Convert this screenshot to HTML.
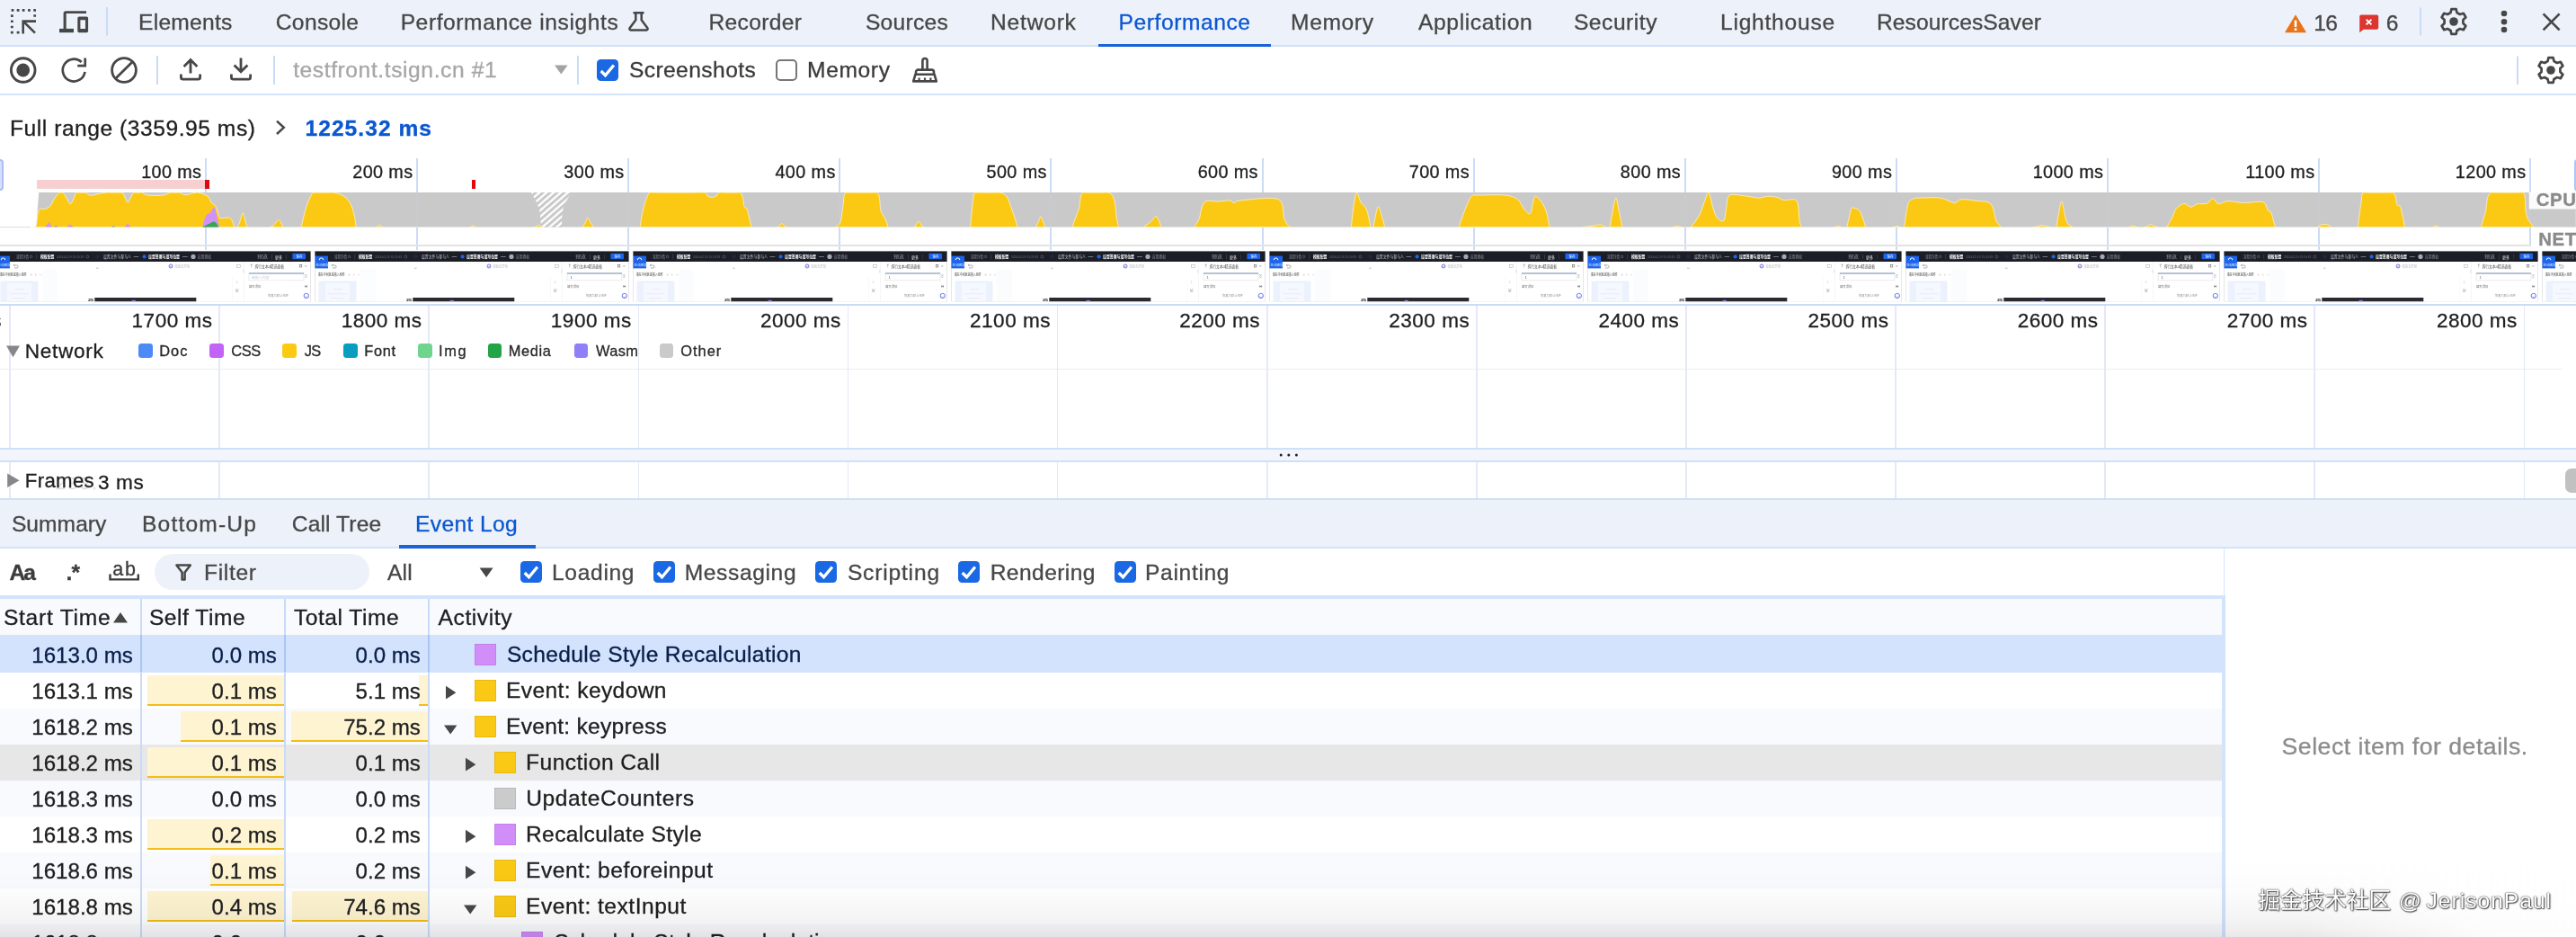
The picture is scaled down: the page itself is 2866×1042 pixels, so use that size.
<!DOCTYPE html>
<html lang="en"><head><meta charset="utf-8"><title>DevTools - Performance</title>
<style>
html,body{margin:0;padding:0}
body{width:2866px;height:1042px;position:relative;overflow:hidden;background:#fff;will-change:transform;font-family:"Liberation Sans","Noto Sans CJK SC",sans-serif;-webkit-font-smoothing:antialiased}
.t{position:absolute;white-space:pre;display:block;-webkit-text-stroke:0.32px currentColor}
.cb{position:absolute;box-sizing:border-box;border-radius:4.5px}
.cb.on{background:#1a68e3}
.cb.on svg{display:block}
.cb.off{border:2px solid #767676;background:#fff;border-radius:5px}
.wm{-webkit-text-stroke:0;color:#fff;text-shadow:0 0 2px rgba(0,0,0,.75),1px 1px 1.5px rgba(0,0,0,.7),-0.5px -0.5px 1px rgba(0,0,0,.45)}
svg{overflow:visible}
</style></head>
<body>
<nav id="devtools-tabs" aria-label="DevTools panels">
<div id="tabbar" style="position:absolute;left:0;top:0;width:2866px;height:50px;background:#edf2fa"></div>
<div style="position:absolute;left:0px;top:50px;width:2866px;height:2px;background:#cfe0f9;"></div>
<svg style="position:absolute;left:0px;top:0px;" width="2866" height="50" viewBox="0 0 2866 50"><rect x="12.60" y="9.95" width="2.8" height="2.7" rx=".5" fill="#474747"/><rect x="18.70" y="9.95" width="2.8" height="2.7" rx=".5" fill="#474747"/><rect x="24.70" y="9.95" width="2.8" height="2.7" rx=".5" fill="#474747"/><rect x="31.00" y="9.95" width="2.8" height="2.7" rx=".5" fill="#474747"/><rect x="37.20" y="9.95" width="2.8" height="2.7" rx=".5" fill="#474747"/><rect x="11.95" y="16.25" width="2.8" height="2.7" rx=".5" fill="#474747"/><rect x="11.95" y="22.40" width="2.8" height="2.7" rx=".5" fill="#474747"/><rect x="11.95" y="28.65" width="2.8" height="2.7" rx=".5" fill="#474747"/><rect x="11.95" y="34.75" width="2.8" height="2.7" rx=".5" fill="#474747"/><rect x="37.25" y="16.15" width="2.8" height="2.7" rx=".5" fill="#474747"/><rect x="18.70" y="34.80" width="2.8" height="2.7" rx=".5" fill="#474747"/><path d="M40,23.6 H25.7 V37.5 M26.4,24.3 L39,36.6" fill="none" stroke="#474747" stroke-width="2.6"/><g fill="#474747"><path d="M96,12.2 H73.4 a2.8,2.8 0 0 0 -2.8,2.8 V32 H73.7 V14.9 H96 Z"/><rect x="66" y="31.9" width="16" height="4.3"/><path fill-rule="evenodd" d="M88,18.5 H96.4 a1.7,1.7 0 0 1 1.7,1.7 V34.5 a1.7,1.7 0 0 1 -1.7,1.7 H88 a1.7,1.7 0 0 1 -1.7,-1.7 V20.2 a1.7,1.7 0 0 1 1.7,-1.7 Z M89.4,22.2 V31.9 H95 V22.2 Z"/></g><rect x="118" y="8" width="2" height="31.5" fill="#c9dbf5"/><g fill="none" stroke="#474747" stroke-width="2.5" stroke-linejoin="round"><path d="M704.5,14.3 H716.5 M707.3,14.3 V22.2 L700.6,31.2 a1.4,1.4 0 0 0 1.2,2.2 H719.2 a1.4,1.4 0 0 0 1.2,-2.2 L713.7,22.2 V14.3"/></g><path d="M2554,16.2 L2565.6,35.4 a0.6,0.6 0 0 1 -0.5,0.9 H2542.9 a0.6,0.6 0 0 1 -0.5,-0.9 Z" fill="#e8731a"/><rect x="2552.7" y="22.6" width="2.6" height="7.4" fill="#fff"/><rect x="2552.7" y="31.4" width="2.6" height="2.6" fill="#fff"/><path d="M2627,16.6 H2644.4 a1.8,1.8 0 0 1 1.8,1.8 V31 a1.8,1.8 0 0 1 -1.8,1.8 H2629.6 L2625.2,36.2 V18.4 a1.8,1.8 0 0 1 1.8,-1.8 Z" fill="#dc362e"/><path d="M2632.6,21.6 L2638.4,27.4 M2638.4,21.6 L2632.6,27.4" stroke="#fff" stroke-width="2" fill="none"/><rect x="2692" y="8.5" width="2" height="31" fill="#c9dbf5"/><path d="M2726.55,13.98 L2727.41,10.04 L2732.59,10.04 L2733.45,13.98 L2736.95,16.00 L2740.80,14.78 L2743.39,19.26 L2740.41,21.98 L2740.41,26.02 L2743.39,28.74 L2740.80,33.22 L2736.95,32.00 L2733.45,34.02 L2732.59,37.96 L2727.41,37.96 L2726.55,34.02 L2723.05,32.00 L2719.20,33.22 L2716.61,28.74 L2719.59,26.02 L2719.59,21.98 L2716.61,19.26 L2719.20,14.78 L2723.05,16.00Z" fill="none" stroke="#474747" stroke-width="2.7" stroke-linejoin="round"/><circle cx="2730" cy="24" r="4.8" fill="#474747"/><circle cx="2786" cy="15" r="3.3" fill="#474747"/><circle cx="2786" cy="24.3" r="3.3" fill="#474747"/><circle cx="2786" cy="33" r="3.3" fill="#474747"/><path d="M2829.6,15.4 L2847.6,33.4 M2847.6,15.4 L2829.6,33.4" stroke="#474747" stroke-width="2.7" fill="none"/></svg>
<span class="t" style="left:154.03px;top:9.38px;font-size:24.6px;line-height:32px;color:#474747;letter-spacing:0.250px;">Elements</span>
<span class="t" style="left:306.77px;top:9.38px;font-size:24.6px;line-height:32px;color:#474747;letter-spacing:0.342px;">Console</span>
<span class="t" style="left:445.63px;top:9.38px;font-size:24.6px;line-height:32px;color:#474747;letter-spacing:0.585px;">Performance insights</span>
<span class="t" style="left:788.53px;top:9.38px;font-size:24.6px;line-height:32px;color:#474747;letter-spacing:0.319px;">Recorder</span>
<span class="t" style="left:962.89px;top:9.38px;font-size:24.6px;line-height:32px;color:#474747;letter-spacing:0.281px;">Sources</span>
<span class="t" style="left:1102.03px;top:9.38px;font-size:24.6px;line-height:32px;color:#474747;letter-spacing:0.781px;">Network</span>
<span class="t" style="left:1244.53px;top:9.38px;font-size:24.6px;line-height:32px;color:#0b57d0;letter-spacing:0.574px;">Performance</span>
<span class="t" style="left:1436.03px;top:9.38px;font-size:24.6px;line-height:32px;color:#474747;letter-spacing:0.632px;">Memory</span>
<span class="t" style="left:1578.00px;top:9.38px;font-size:24.6px;line-height:32px;color:#474747;letter-spacing:0.630px;">Application</span>
<span class="t" style="left:1750.89px;top:9.38px;font-size:24.6px;line-height:32px;color:#474747;letter-spacing:0.543px;">Security</span>
<span class="t" style="left:1914.03px;top:9.38px;font-size:24.6px;line-height:32px;color:#474747;letter-spacing:0.753px;">Lighthouse</span>
<span class="t" style="left:2088.03px;top:9.38px;font-size:24.6px;line-height:32px;color:#474747;letter-spacing:0.080px;">ResourcesSaver</span>
<span class="t" style="left:2574.16px;top:10.18px;font-size:24.6px;line-height:32px;color:#474747;letter-spacing:-0.477px;">16</span>
<span class="t" style="left:2654.77px;top:10.18px;font-size:24.6px;line-height:32px;color:#474747;">6</span>
<div style="position:absolute;left:1222px;top:48.9px;width:192px;height:3.2px;background:#1a62d8;"></div>
</nav>
<div id="perf-toolbar" aria-label="Performance toolbar">
<div style="position:absolute;left:0px;top:52px;width:2866px;height:52px;background:#fff;"></div>
<div style="position:absolute;left:0px;top:103.6px;width:2866px;height:2px;background:#d3e3fd;"></div>
<svg style="position:absolute;left:0px;top:52px;" width="2866" height="52" viewBox="0 52 2866 52"><circle cx="25.7" cy="78" r="13.3" fill="none" stroke="#474747" stroke-width="2.9"/><circle cx="25.7" cy="78" r="7.4" fill="#474747"/><path d="M94.48,79.83 A12.4,12.4 0 1 1 90.66,69.03" fill="none" stroke="#474747" stroke-width="2.7"/><path d="M94.7,64.4 V73.2 H86.2" fill="none" stroke="#474747" stroke-width="2.7"/><circle cx="138" cy="78" r="13.4" fill="none" stroke="#474747" stroke-width="2.8"/><path d="M147.6,68.6 L128.4,87.4" stroke="#474747" stroke-width="2.8"/><rect x="174" y="62" width="2" height="32" fill="#c9dbf5"/><g fill="none" stroke="#474747" stroke-width="2.8"><path d="M201.4,82.5 V86 a2.2,2.2 0 0 0 2.2,2.2 H220.4 a2.2,2.2 0 0 0 2.2,-2.2 V82.5"/><path d="M212,81.5 V66.8 M204.6,74 L212,66.6 L219.4,74"/></g><g fill="none" stroke="#474747" stroke-width="2.8"><path d="M257.4,82.5 V86 a2.2,2.2 0 0 0 2.2,2.2 H276.4 a2.2,2.2 0 0 0 2.2,-2.2 V82.5"/><path d="M268,64.6 V79.6 M260.6,72.4 L268,79.8 L275.4,72.4"/></g><rect x="304" y="62" width="2" height="32" fill="#c9dbf5"/><path d="M617,72.6 H631.6 L624.3,82.6 Z" fill="#a3a3a3"/><rect x="642" y="62" width="2" height="32" fill="#c9dbf5"/><g fill="none" stroke="#474747" stroke-width="2.6" stroke-linejoin="round"><path d="M1026.4,77.5 V67.6 a2.6,2.6 0 0 1 5.2,0 V77.5"/><path d="M1019,82.6 V80 a2.4,2.4 0 0 1 2.4,-2.4 H1036.6 a2.4,2.4 0 0 1 2.4,2.4 V82.6"/><path d="M1018.4,82.8 H1039.6 L1041.8,90.4 H1016.2 Z"/><path d="M1022.6,90.4 V86.6 M1029,90.4 V86.6 M1035.4,90.4 V86.6" stroke-width="2.2"/></g><rect x="2800" y="62.5" width="2" height="31.5" fill="#c9dbf5"/><path d="M2834.55,67.98 L2835.41,64.04 L2840.59,64.04 L2841.45,67.98 L2844.95,70.00 L2848.80,68.78 L2851.39,73.26 L2848.41,75.98 L2848.41,80.02 L2851.39,82.74 L2848.80,87.22 L2844.95,86.00 L2841.45,88.02 L2840.59,91.96 L2835.41,91.96 L2834.55,88.02 L2831.05,86.00 L2827.20,87.22 L2824.61,82.74 L2827.59,80.02 L2827.59,75.98 L2824.61,73.26 L2827.20,68.78 L2831.05,70.00Z" fill="none" stroke="#474747" stroke-width="2.7" stroke-linejoin="round"/><circle cx="2838" cy="78" r="4.8" fill="#474747"/></svg>
<span class="t" style="left:326.13px;top:62.38px;font-size:24.6px;line-height:32px;color:#a6a6a6;letter-spacing:0.592px;">testfront.tsign.cn #1</span>
<div class="cb on" style="left:664px;top:66px;width:24px;height:24px"><svg width="24" height="24" viewBox="0 0 24 24"><path d="M4.7 13 L9.5 17.7 L18.9 6.5" fill="none" stroke="#fff" stroke-width="3.3" stroke-linecap="butt" stroke-linejoin="miter"/></svg></div>
<span class="t" style="left:699.89px;top:62.38px;font-size:24.6px;line-height:32px;color:#3a3a3a;letter-spacing:0.419px;">Screenshots</span>
<div class="cb off" style="left:863px;top:66px;width:24px;height:24px"></div>
<span class="t" style="left:898.03px;top:62.38px;font-size:24.6px;line-height:32px;color:#3a3a3a;letter-spacing:0.632px;">Memory</span>
</div>
<div id="range-breadcrumb" aria-label="Range breadcrumb">
<div style="position:absolute;left:0px;top:105.6px;width:2866px;height:68px;background:#fff;"></div>
<span class="t" style="left:11.03px;top:126.88px;font-size:24.6px;line-height:32px;color:#1f1f1f;letter-spacing:0.537px;">Full range (3359.95 ms)</span>
<svg style="position:absolute;left:300px;top:128px;" width="24" height="28" viewBox="300 128 24 28"><path d="M308,134.6 L315.8,141.8 L308,149" fill="none" stroke="#474747" stroke-width="2.5"/></svg>
<span class="t" style="left:339.52px;top:126.88px;font-size:24.6px;line-height:32px;color:#0b57d0;font-weight:700;letter-spacing:1.024px;">1225.32 ms</span>
</div>
<section id="timeline-overview" aria-label="Timeline overview">
<div style="position:absolute;left:0px;top:173px;width:2866px;height:166px;background:#fff;"></div>
<div style="position:absolute;left:-5px;top:177.4px;width:4.6px;height:31px;background:#d5e1fb;border:2px solid #aebdf3;border-radius:4px"></div>
<div style="position:absolute;left:2863.5px;top:177px;width:8px;height:32px;background:#dbe7fd;border:2px solid #a8c7fa;border-radius:4px"></div>
<div style="position:absolute;left:228.0px;top:176px;width:2px;height:38px;background:#cddcf6;"></div>
<div style="position:absolute;left:228.0px;top:252.6px;width:2px;height:25.4px;background:#cddcf6;"></div>
<span class="t" style="left:157.15px;top:177.64px;font-size:19.8px;line-height:26px;color:#1f1f1f;letter-spacing:0.400px;">100 ms</span>
<div style="position:absolute;left:463.1px;top:176px;width:2px;height:38px;background:#cddcf6;"></div>
<div style="position:absolute;left:463.1px;top:252.6px;width:2px;height:25.4px;background:#cddcf6;"></div>
<span class="t" style="left:392.25px;top:177.64px;font-size:19.8px;line-height:26px;color:#1f1f1f;letter-spacing:0.400px;">200 ms</span>
<div style="position:absolute;left:698.2px;top:176px;width:2px;height:38px;background:#cddcf6;"></div>
<div style="position:absolute;left:698.2px;top:252.6px;width:2px;height:25.4px;background:#cddcf6;"></div>
<span class="t" style="left:627.35px;top:177.64px;font-size:19.8px;line-height:26px;color:#1f1f1f;letter-spacing:0.400px;">300 ms</span>
<div style="position:absolute;left:933.3px;top:176px;width:2px;height:38px;background:#cddcf6;"></div>
<div style="position:absolute;left:933.3px;top:252.6px;width:2px;height:25.4px;background:#cddcf6;"></div>
<span class="t" style="left:862.45px;top:177.64px;font-size:19.8px;line-height:26px;color:#1f1f1f;letter-spacing:0.400px;">400 ms</span>
<div style="position:absolute;left:1168.4px;top:176px;width:2px;height:38px;background:#cddcf6;"></div>
<div style="position:absolute;left:1168.4px;top:252.6px;width:2px;height:25.4px;background:#cddcf6;"></div>
<span class="t" style="left:1097.55px;top:177.64px;font-size:19.8px;line-height:26px;color:#1f1f1f;letter-spacing:0.400px;">500 ms</span>
<div style="position:absolute;left:1403.5px;top:176px;width:2px;height:38px;background:#cddcf6;"></div>
<div style="position:absolute;left:1403.5px;top:252.6px;width:2px;height:25.4px;background:#cddcf6;"></div>
<span class="t" style="left:1332.65px;top:177.64px;font-size:19.8px;line-height:26px;color:#1f1f1f;letter-spacing:0.400px;">600 ms</span>
<div style="position:absolute;left:1638.6px;top:176px;width:2px;height:38px;background:#cddcf6;"></div>
<div style="position:absolute;left:1638.6px;top:252.6px;width:2px;height:25.4px;background:#cddcf6;"></div>
<span class="t" style="left:1567.75px;top:177.64px;font-size:19.8px;line-height:26px;color:#1f1f1f;letter-spacing:0.400px;">700 ms</span>
<div style="position:absolute;left:1873.7px;top:176px;width:2px;height:38px;background:#cddcf6;"></div>
<div style="position:absolute;left:1873.7px;top:252.6px;width:2px;height:25.4px;background:#cddcf6;"></div>
<span class="t" style="left:1802.85px;top:177.64px;font-size:19.8px;line-height:26px;color:#1f1f1f;letter-spacing:0.400px;">800 ms</span>
<div style="position:absolute;left:2108.8px;top:176px;width:2px;height:38px;background:#cddcf6;"></div>
<div style="position:absolute;left:2108.8px;top:252.6px;width:2px;height:25.4px;background:#cddcf6;"></div>
<span class="t" style="left:2037.95px;top:177.64px;font-size:19.8px;line-height:26px;color:#1f1f1f;letter-spacing:0.400px;">900 ms</span>
<div style="position:absolute;left:2343.9px;top:176px;width:2px;height:38px;background:#cddcf6;"></div>
<div style="position:absolute;left:2343.9px;top:252.6px;width:2px;height:25.4px;background:#cddcf6;"></div>
<span class="t" style="left:2261.66px;top:177.64px;font-size:19.8px;line-height:26px;color:#1f1f1f;letter-spacing:0.400px;">1000 ms</span>
<div style="position:absolute;left:2579.0px;top:176px;width:2px;height:38px;background:#cddcf6;"></div>
<div style="position:absolute;left:2579.0px;top:252.6px;width:2px;height:25.4px;background:#cddcf6;"></div>
<span class="t" style="left:2498.24px;top:177.64px;font-size:19.8px;line-height:26px;color:#1f1f1f;letter-spacing:0.400px;">1100 ms</span>
<div style="position:absolute;left:2814.1px;top:176px;width:2px;height:38px;background:#cddcf6;"></div>
<div style="position:absolute;left:2814.1px;top:252.6px;width:2px;height:19.6px;background:#cddcf6;"></div>
<span class="t" style="left:2731.86px;top:177.64px;font-size:19.8px;line-height:26px;color:#1f1f1f;letter-spacing:0.400px;">1200 ms</span>
<div style="position:absolute;left:41px;top:200px;width:187px;height:10px;background:#f7cfd1;"></div>
<div style="position:absolute;left:228px;top:200px;width:4.6px;height:10px;background:#e3060c;"></div>
<div style="position:absolute;left:524.5px;top:200px;width:4.6px;height:10px;background:#e3060c;"></div>
<svg style="position:absolute;left:0px;top:213.0px;" width="2866" height="40.599999999999994" viewBox="0 213.0 2866 40.599999999999994"><path d="M43,214.0 H2866 V252.6 H40 Z" fill="#c9c9c9"/><rect x="228.0" y="214.0" width="2" height="38.599999999999994" fill="#cddcf6" opacity=".14"/><rect x="463.1" y="214.0" width="2" height="38.599999999999994" fill="#cddcf6" opacity=".14"/><rect x="698.2" y="214.0" width="2" height="38.599999999999994" fill="#cddcf6" opacity=".14"/><rect x="933.3" y="214.0" width="2" height="38.599999999999994" fill="#cddcf6" opacity=".14"/><rect x="1168.4" y="214.0" width="2" height="38.599999999999994" fill="#cddcf6" opacity=".14"/><rect x="1403.5" y="214.0" width="2" height="38.599999999999994" fill="#cddcf6" opacity=".14"/><rect x="1638.6" y="214.0" width="2" height="38.599999999999994" fill="#cddcf6" opacity=".14"/><rect x="1873.7" y="214.0" width="2" height="38.599999999999994" fill="#cddcf6" opacity=".14"/><rect x="2108.8" y="214.0" width="2" height="38.599999999999994" fill="#cddcf6" opacity=".14"/><rect x="2343.9" y="214.0" width="2" height="38.599999999999994" fill="#cddcf6" opacity=".14"/><rect x="2579.0" y="214.0" width="2" height="38.599999999999994" fill="#cddcf6" opacity=".14"/><rect x="2814.1" y="214.0" width="2" height="38.599999999999994" fill="#cddcf6" opacity=".14"/><defs><pattern id="hat" width="5.2" height="5.2" patternUnits="userSpaceOnUse" patternTransform="rotate(-41)"><rect width="5.2" height="5.2" fill="#fff"/><rect width="5.2" height="2.9" fill="#c8c8c8"/></pattern></defs><path d="M590.8,214.0 H635.7 L628,227.0 L625.4,236.0 L624.9,252.6 H602 L600.6,236.0 L597.5,226.0 Z" fill="url(#hat)"/><path d="M36.0,252.60 C36.7,252.41 38.8,252.60 40.0,251.44 C41.2,248.29 41.3,236.84 43.0,233.69 C44.7,230.53 47.8,233.36 50.0,232.53 C52.2,231.69 54.3,230.53 56.0,228.67 C57.7,226.80 58.3,223.78 60.0,221.33 C61.7,218.89 64.3,215.22 66.0,214.00 C67.7,214.30 68.7,214.30 70.0,214.00 C71.3,215.03 72.4,218.05 73.8,220.18 C75.1,222.30 76.6,226.74 78.0,226.74 C79.4,226.74 80.8,222.30 82.0,220.18 C83.2,218.05 83.0,215.03 85.0,214.00 C87.0,214.30 91.5,214.30 94.0,214.00 C96.5,214.51 98.0,216.70 100.0,217.09 C102.0,217.47 102.8,216.83 106.0,216.32 C109.2,215.80 114.8,214.39 119.0,214.00 C123.2,214.30 128.2,214.30 131.0,214.00 C133.8,214.30 134.7,214.30 136.0,214.00 C137.3,215.03 138.0,218.31 139.0,220.18 C140.0,222.04 141.0,225.19 142.0,225.19 C143.0,225.19 143.8,222.04 145.0,220.18 C146.2,218.31 146.9,215.03 149.0,214.00 C151.1,214.30 155.0,214.30 157.5,214.00 C160.0,214.51 160.1,216.57 164.0,217.09 C167.9,217.60 176.7,217.60 181.0,217.09 C185.3,216.57 187.0,214.51 190.0,214.00 C193.0,214.30 196.3,214.30 199.0,214.00 C201.7,214.45 202.7,216.70 206.0,216.70 C209.3,216.70 215.2,214.30 219.0,214.00 C222.8,214.30 226.8,216.06 229.0,217.09 C231.2,218.12 231.4,218.63 232.5,220.18 C233.6,221.72 234.4,224.94 235.6,226.35 C236.8,227.77 238.2,226.80 239.4,228.67 C240.6,230.53 241.6,235.23 242.5,237.55 C243.4,239.86 242.8,241.73 245.0,242.56 C247.2,243.40 253.4,240.89 256.0,242.56 C258.6,244.24 259.8,250.93 260.6,252.60Z" fill="#fbc914" stroke="#fff3c4" stroke-width="0.8" stroke-linejoin="round"/><path d="M263.8,252.60 C264.1,251.96 265.2,250.80 266.0,248.74 C266.8,246.68 267.8,242.24 268.5,240.25 C269.2,238.25 269.5,236.77 270.0,236.77 C270.5,236.77 270.9,238.25 271.5,240.25 C272.1,242.24 272.8,246.68 273.5,248.74 C274.2,250.80 275.2,251.96 275.6,252.60Z" fill="#fbc914" stroke="#fff3c4" stroke-width="0.8" stroke-linejoin="round"/><path d="M300.0,252.60 C300.7,252.28 302.7,251.76 304.0,250.67 C305.3,249.58 307.0,247.07 308.0,246.04 C309.0,245.01 309.3,244.37 310.0,244.49 C310.7,244.62 311.3,245.78 312.0,246.81 C312.7,247.84 313.4,249.70 314.0,250.67 C314.6,251.63 315.3,252.28 315.6,252.60Z" fill="#fbc914" stroke="#fff3c4" stroke-width="0.8" stroke-linejoin="round"/><path d="M335.0,252.60 C335.8,249.19 338.3,237.67 340.0,232.14 C341.7,226.61 343.3,222.43 345.0,219.40 C346.7,216.38 345.8,214.90 350.0,214.00 C354.2,214.30 364.6,214.30 370.0,214.00 C375.4,214.71 379.2,216.06 382.5,218.25 C385.8,220.43 388.1,223.59 390.0,227.12 C391.9,230.66 393.0,235.23 394.0,239.48 C395.0,243.72 395.7,250.41 396.0,252.60Z" fill="#fbc914" stroke="#fff3c4" stroke-width="0.8" stroke-linejoin="round"/><path d="M418.0,252.60 C418.2,252.57 418.8,252.57 419.2,252.41 C419.6,252.25 420.0,251.89 420.3,251.63 C420.7,251.38 421.0,251.02 421.3,250.86 C421.6,250.70 421.8,250.67 422.0,250.67 C422.2,250.67 422.4,250.70 422.7,250.86 C423.0,251.02 423.3,251.38 423.7,251.63 C424.0,251.89 424.4,252.25 424.8,252.41 C425.2,252.57 425.8,252.57 426.0,252.60Z" fill="#fbc914" stroke="#fff3c4" stroke-width="0.8" stroke-linejoin="round"/><path d="M522.0,252.60 C522.2,252.57 522.8,252.57 523.2,252.45 C523.6,252.32 524.0,252.03 524.3,251.83 C524.7,251.62 525.0,251.34 525.3,251.21 C525.6,251.08 525.8,251.06 526.0,251.06 C526.2,251.06 526.4,251.08 526.7,251.21 C527.0,251.34 527.3,251.62 527.7,251.83 C528.0,252.03 528.4,252.32 528.8,252.45 C529.2,252.57 529.8,252.57 530.0,252.60Z" fill="#fbc914" stroke="#fff3c4" stroke-width="0.8" stroke-linejoin="round"/><path d="M594.0,252.60 C594.2,252.56 595.0,252.56 595.5,252.37 C596.0,252.18 596.5,251.75 596.9,251.44 C597.3,251.13 597.8,250.71 598.1,250.52 C598.5,250.32 598.7,250.28 599.0,250.28 C599.3,250.28 599.5,250.32 599.9,250.52 C600.2,250.71 600.7,251.13 601.1,251.44 C601.5,251.75 602.0,252.18 602.5,252.37 C603.0,252.56 603.8,252.56 604.0,252.60Z" fill="#fbc914" stroke="#fff3c4" stroke-width="0.8" stroke-linejoin="round"/><path d="M647.6,252.60 C648.2,251.83 650.0,249.70 651.0,247.97 C652.0,246.23 652.9,242.18 653.9,242.18 C654.9,242.18 655.9,246.23 657.0,247.97 C658.1,249.70 659.8,251.83 660.4,252.60Z" fill="#fbc914" stroke="#fff3c4" stroke-width="0.8" stroke-linejoin="round"/><path d="M712.0,252.60 C712.4,250.03 713.5,241.86 714.5,237.16 C715.5,232.46 716.8,227.64 717.8,224.42 C718.8,221.21 719.5,219.60 720.5,217.86 C721.5,216.12 720.5,214.64 723.5,214.00 C733.9,214.30 772.4,214.30 783.0,214.00 C787.0,214.64 785.5,216.96 787.0,217.86 C788.5,218.76 790.3,219.40 792.0,219.40 C793.7,219.40 795.4,218.76 797.0,217.86 C798.6,216.96 797.2,214.64 801.5,214.00 C805.8,214.30 818.6,214.30 823.0,214.00 C827.4,216.64 826.7,226.67 828.0,229.83 C829.3,232.98 829.7,229.12 831.0,232.91 C832.3,236.71 835.2,249.32 836.0,252.60Z" fill="#fbc914" stroke="#fff3c4" stroke-width="0.8" stroke-linejoin="round"/><path d="M864.0,252.60 C864.3,252.54 865.2,252.54 865.8,252.21 C866.4,251.89 867.0,251.18 867.5,250.67 C868.0,250.16 868.5,249.45 868.9,249.13 C869.3,248.80 869.6,248.74 870.0,248.74 C870.4,248.74 870.7,248.80 871.1,249.13 C871.5,249.45 872.0,250.16 872.5,250.67 C873.0,251.18 873.6,251.89 874.2,252.21 C874.8,252.54 875.7,252.54 876.0,252.60Z" fill="#fbc914" stroke="#fff3c4" stroke-width="0.8" stroke-linejoin="round"/><path d="M929.0,252.60 C930.0,251.63 933.5,250.86 935.0,246.81 C936.5,242.76 937.0,233.75 938.0,228.28 C939.0,222.81 938.0,216.38 941.0,214.00 C947.2,214.30 969.0,214.30 975.5,214.00 C980.0,217.41 978.4,229.50 980.0,234.46 C981.6,239.41 983.7,240.70 985.0,243.72 C986.3,246.75 987.5,251.12 988.0,252.60Z" fill="#fbc914" stroke="#fff3c4" stroke-width="0.8" stroke-linejoin="round"/><path d="M1016.0,252.60 C1016.3,252.50 1017.2,252.50 1017.8,251.98 C1018.4,251.47 1019.0,250.34 1019.5,249.51 C1020.0,248.69 1020.5,247.56 1020.9,247.04 C1021.3,246.53 1021.6,246.42 1022.0,246.42 C1022.4,246.42 1022.7,246.53 1023.1,247.04 C1023.5,247.56 1024.0,248.69 1024.5,249.51 C1025.0,250.34 1025.6,251.47 1026.2,251.98 C1026.8,252.50 1027.7,252.50 1028.0,252.60Z" fill="#fbc914" stroke="#fff3c4" stroke-width="0.8" stroke-linejoin="round"/><path d="M1079.5,252.60 C1080.0,247.45 1081.6,228.15 1082.6,221.72 C1083.6,215.29 1082.6,215.29 1085.7,214.00 C1090.4,214.30 1104.8,214.30 1110.5,214.00 C1116.2,214.77 1117.7,215.99 1120.0,218.63 C1122.3,221.27 1123.0,225.90 1124.5,229.83 C1126.0,233.75 1127.8,238.38 1129.0,242.18 C1130.2,245.97 1131.5,250.86 1132.0,252.60Z" fill="#fbc914" stroke="#fff3c4" stroke-width="0.8" stroke-linejoin="round"/><path d="M1152.5,252.60 C1153.1,251.31 1155.1,246.87 1156.0,244.88 C1156.9,242.89 1157.3,240.63 1158.0,240.63 C1158.7,240.63 1159.2,242.89 1160.0,244.88 C1160.8,246.87 1162.5,251.31 1163.0,252.60Z" fill="#fbc914" stroke="#fff3c4" stroke-width="0.8" stroke-linejoin="round"/><path d="M1193.0,252.60 C1193.5,251.12 1194.7,247.26 1196.0,243.72 C1197.3,240.18 1199.1,236.32 1200.6,231.37 C1202.1,226.42 1200.6,216.90 1205.0,214.00 C1210.2,214.30 1226.0,214.30 1231.7,214.00 C1237.4,215.29 1237.6,216.77 1239.4,221.72 C1241.2,226.67 1241.6,238.58 1242.5,243.72 C1243.4,248.87 1244.3,251.12 1244.7,252.60Z" fill="#fbc914" stroke="#fff3c4" stroke-width="0.8" stroke-linejoin="round"/><path d="M1272.0,252.60 C1273.3,251.63 1277.7,248.80 1280.0,246.81 C1282.3,244.82 1284.5,240.96 1286.0,240.63 C1287.5,240.31 1288.0,242.89 1289.0,244.88 C1290.0,246.87 1291.5,251.31 1292.0,252.60Z" fill="#fbc914" stroke="#fff3c4" stroke-width="0.8" stroke-linejoin="round"/><path d="M1328.0,252.60 C1329.0,251.12 1332.0,248.35 1334.0,243.72 C1336.0,239.09 1336.3,228.09 1340.0,224.81 C1343.7,221.53 1351.3,224.36 1356.0,224.04 C1360.7,223.71 1365.2,222.62 1368.0,222.88 C1370.8,223.14 1370.9,225.58 1373.0,225.58 C1375.1,225.58 1373.0,223.52 1380.7,222.88 C1389.0,222.23 1414.7,218.25 1422.7,221.72 C1429.0,225.19 1427.0,238.58 1429.0,243.72 C1431.0,248.87 1434.0,251.12 1435.0,252.60Z" fill="#fbc914" stroke="#fff3c4" stroke-width="0.8" stroke-linejoin="round"/><path d="M1503.4,252.60 C1503.8,248.74 1505.0,235.87 1506.0,229.44 C1507.0,223.01 1508.3,214.77 1509.6,214.00 C1510.9,214.30 1512.2,221.59 1514.0,224.81 C1515.8,228.02 1518.7,228.67 1520.5,233.30 C1522.3,237.93 1524.2,249.38 1525.0,252.60Z" fill="#fbc914" stroke="#fff3c4" stroke-width="0.8" stroke-linejoin="round"/><path d="M1528.0,252.60 C1528.5,250.03 1530.1,240.96 1531.0,237.16 C1531.9,233.36 1532.6,229.83 1533.5,229.83 C1534.4,229.83 1535.3,233.36 1536.5,237.16 C1537.7,240.96 1540.0,250.03 1540.7,252.60Z" fill="#fbc914" stroke="#fff3c4" stroke-width="0.8" stroke-linejoin="round"/><path d="M1623.0,252.60 C1624.1,249.58 1627.2,240.12 1629.5,234.46 C1631.8,228.80 1634.2,221.53 1637.0,218.63 C1639.8,215.74 1640.3,217.35 1646.6,217.09 C1652.8,216.83 1667.5,216.32 1674.5,217.09 C1681.5,217.86 1684.9,219.08 1688.5,221.72 C1692.1,224.36 1693.7,230.28 1696.0,232.91 C1698.3,235.55 1700.9,238.77 1702.5,237.55 C1704.1,236.32 1704.5,228.80 1705.5,225.58 C1706.5,222.36 1706.9,218.05 1708.7,218.25 C1710.5,218.44 1714.5,223.52 1716.5,226.74 C1718.5,229.95 1719.8,233.24 1721.0,237.55 C1722.2,241.86 1723.5,250.09 1724.0,252.60Z" fill="#fbc914" stroke="#fff3c4" stroke-width="0.8" stroke-linejoin="round"/><path d="M1761.0,252.60 C1763.0,252.34 1769.7,251.51 1773.0,251.06 C1776.3,250.61 1778.8,249.64 1781.0,249.90 C1783.2,250.16 1785.2,252.15 1786.0,252.60Z" fill="#fbc914" stroke="#fff3c4" stroke-width="0.8" stroke-linejoin="round"/><path d="M1791.0,252.60 C1791.6,249.38 1793.4,238.70 1794.5,233.30 C1795.6,227.90 1796.7,220.18 1797.8,220.18 C1798.9,220.18 1799.8,227.90 1801.0,233.30 C1802.2,238.70 1804.3,249.38 1805.0,252.60Z" fill="#fbc914" stroke="#fff3c4" stroke-width="0.8" stroke-linejoin="round"/><path d="M1860.0,252.60 C1860.3,252.58 1861.2,252.58 1861.8,252.48 C1862.4,252.39 1863.0,252.18 1863.5,252.02 C1864.0,251.87 1864.5,251.65 1864.9,251.56 C1865.3,251.46 1865.6,251.44 1866.0,251.44 C1866.4,251.44 1866.7,251.46 1867.1,251.56 C1867.5,251.65 1868.0,251.87 1868.5,252.02 C1869.0,252.18 1869.6,252.39 1870.2,252.48 C1870.8,252.58 1871.7,252.58 1872.0,252.60Z" fill="#fbc914" stroke="#fff3c4" stroke-width="0.8" stroke-linejoin="round"/><path d="M1881.0,252.60 C1882.5,250.61 1887.5,245.14 1890.0,240.63 C1892.5,236.13 1894.2,230.02 1896.0,225.58 C1897.8,221.14 1899.3,214.30 1901.0,214.00 C1902.7,214.97 1904.4,226.67 1906.0,231.37 C1907.6,236.07 1908.5,239.86 1910.5,242.18 C1912.5,244.49 1916.2,247.39 1918.0,245.27 C1919.8,243.14 1919.9,234.14 1921.0,229.44 C1922.1,224.74 1921.1,219.02 1924.5,217.09 C1927.9,215.16 1936.2,217.35 1941.6,217.86 C1947.0,218.37 1952.8,220.11 1957.0,220.18 C1961.2,220.24 1963.2,218.37 1966.5,218.25 C1969.8,218.12 1973.9,218.70 1977.0,219.40 C1980.1,220.11 1981.3,221.85 1985.0,222.49 C1988.7,223.14 1996.2,219.73 1999.0,223.26 C2001.8,226.80 2001.2,238.83 2002.0,243.72 C2002.8,248.61 2003.7,251.12 2004.0,252.60Z" fill="#fbc914" stroke="#fff3c4" stroke-width="0.8" stroke-linejoin="round"/><path d="M2040.0,252.60 C2040.2,252.58 2041.0,252.58 2041.5,252.48 C2042.0,252.39 2042.5,252.18 2042.9,252.02 C2043.3,251.87 2043.8,251.65 2044.1,251.56 C2044.4,251.46 2044.7,251.44 2045.0,251.44 C2045.3,251.44 2045.6,251.46 2045.9,251.56 C2046.2,251.65 2046.7,251.87 2047.1,252.02 C2047.5,252.18 2048.0,252.39 2048.5,252.48 C2049.0,252.58 2049.8,252.58 2050.0,252.60Z" fill="#fbc914" stroke="#fff3c4" stroke-width="0.8" stroke-linejoin="round"/><path d="M2055.0,252.60 C2055.8,249.32 2058.3,236.45 2059.6,232.91 C2060.9,229.38 2061.4,231.11 2063.0,231.37 C2064.6,231.63 2067.2,232.08 2069.0,234.46 C2070.8,236.84 2072.5,242.63 2073.6,245.65 C2074.7,248.68 2075.4,251.44 2075.8,252.60Z" fill="#fbc914" stroke="#fff3c4" stroke-width="0.8" stroke-linejoin="round"/><path d="M2105.0,252.60 C2105.2,252.58 2106.0,252.58 2106.5,252.48 C2107.0,252.39 2107.5,252.18 2107.9,252.02 C2108.3,251.87 2108.8,251.65 2109.1,251.56 C2109.4,251.46 2109.7,251.44 2110.0,251.44 C2110.3,251.44 2110.7,251.46 2111.1,251.56 C2111.5,251.65 2112.0,251.87 2112.5,252.02 C2113.0,252.18 2113.6,252.39 2114.2,252.48 C2114.8,252.58 2115.7,252.58 2116.0,252.60Z" fill="#fbc914" stroke="#fff3c4" stroke-width="0.8" stroke-linejoin="round"/><path d="M2118.6,252.60 C2119.3,248.29 2121.4,231.88 2123.0,226.74 C2124.6,221.59 2126.2,222.81 2128.0,221.72 C2129.8,220.63 2128.8,220.43 2134.0,220.18 C2139.2,219.92 2152.2,219.28 2159.0,220.18 C2165.8,221.08 2170.7,225.32 2174.5,225.58 C2178.3,225.84 2177.9,222.11 2182.0,221.72 C2186.1,221.33 2193.5,222.43 2199.0,223.26 C2204.5,224.10 2211.3,223.07 2215.0,226.74 C2218.7,230.41 2219.0,240.96 2221.0,245.27 C2223.0,249.58 2226.0,251.38 2227.0,252.60Z" fill="#fbc914" stroke="#fff3c4" stroke-width="0.8" stroke-linejoin="round"/><path d="M2261.0,252.60 C2261.6,252.57 2263.2,252.57 2264.3,252.41 C2265.4,252.25 2266.4,251.89 2267.4,251.63 C2268.3,251.38 2269.2,251.02 2270.0,250.86 C2270.8,250.70 2271.3,250.67 2272.0,250.67 C2272.7,250.67 2273.2,250.70 2274.0,250.86 C2274.8,251.02 2275.7,251.38 2276.6,251.63 C2277.6,251.89 2278.6,252.25 2279.7,252.41 C2280.8,252.57 2282.4,252.57 2283.0,252.60Z" fill="#fbc914" stroke="#fff3c4" stroke-width="0.8" stroke-linejoin="round"/><path d="M2288.0,252.60 C2288.5,249.70 2290.0,239.99 2291.0,235.23 C2292.0,230.47 2293.0,223.71 2294.0,224.04 C2295.0,224.36 2296.0,233.17 2297.0,237.16 C2298.0,241.15 2298.4,245.39 2300.0,247.97 C2301.6,250.54 2305.4,251.83 2306.5,252.60Z" fill="#fbc914" stroke="#fff3c4" stroke-width="0.8" stroke-linejoin="round"/><path d="M2368.0,252.60 C2368.2,252.57 2369.0,252.57 2369.5,252.45 C2370.0,252.32 2370.5,252.03 2370.9,251.83 C2371.3,251.62 2371.8,251.34 2372.1,251.21 C2372.4,251.08 2372.7,251.06 2373.0,251.06 C2373.3,251.06 2373.7,251.08 2374.1,251.21 C2374.5,251.34 2375.0,251.62 2375.5,251.83 C2376.0,252.03 2376.6,252.32 2377.2,252.45 C2377.8,252.57 2378.7,252.57 2379.0,252.60Z" fill="#fbc914" stroke="#fff3c4" stroke-width="0.8" stroke-linejoin="round"/><path d="M2385.0,252.60 C2385.4,252.55 2386.6,252.55 2387.4,252.33 C2388.2,252.10 2388.9,251.61 2389.6,251.25 C2390.3,250.89 2391.0,250.39 2391.6,250.17 C2392.1,249.94 2392.5,249.90 2393.0,249.90 C2393.5,249.90 2394.0,249.94 2394.6,250.17 C2395.2,250.39 2396.0,250.89 2396.8,251.25 C2397.6,251.61 2398.4,252.10 2399.3,252.33 C2400.2,252.55 2401.6,252.55 2402.0,252.60Z" fill="#fbc914" stroke="#fff3c4" stroke-width="0.8" stroke-linejoin="round"/><path d="M2410.8,252.60 C2411.8,250.80 2415.3,245.14 2417.0,241.79 C2418.7,238.45 2418.8,235.10 2421.0,232.53 C2423.2,229.95 2427.2,226.74 2430.0,226.35 C2432.8,225.97 2435.2,230.15 2437.7,230.21 C2440.2,230.28 2442.0,227.38 2445.0,226.74 C2448.0,226.09 2452.8,227.38 2455.6,226.35 C2458.4,225.32 2459.9,220.50 2462.0,220.56 C2464.1,220.63 2465.6,226.22 2468.4,226.74 C2471.2,227.25 2474.0,223.84 2478.7,223.65 C2483.4,223.46 2491.0,225.45 2496.6,225.58 C2502.2,225.71 2508.2,224.42 2512.0,224.42 C2515.8,224.42 2517.8,223.97 2519.7,225.58 C2521.6,227.19 2522.3,232.27 2523.5,234.07 C2524.7,235.87 2525.8,233.62 2527.0,236.39 C2528.2,239.15 2530.1,247.97 2531.0,250.67 C2531.9,252.60 2532.2,252.28 2532.5,252.60Z" fill="#fbc914" stroke="#fff3c4" stroke-width="0.8" stroke-linejoin="round"/><path d="M2578.6,252.60 C2579.3,252.15 2581.1,250.35 2583.0,249.90 C2584.9,249.45 2588.2,249.45 2590.0,249.90 C2591.8,250.35 2593.3,252.15 2594.0,252.60Z" fill="#fbc914" stroke="#fff3c4" stroke-width="0.8" stroke-linejoin="round"/><path d="M2623.4,252.60 C2624.0,248.23 2625.9,232.79 2627.0,226.35 C2628.1,219.92 2627.0,216.06 2629.8,214.00 C2635.6,214.30 2655.7,214.30 2661.9,214.00 C2667.0,216.25 2665.5,224.81 2667.0,227.51 C2668.5,230.21 2669.3,226.03 2670.8,230.21 C2672.3,234.39 2675.1,248.87 2676.0,252.60Z" fill="#fbc914" stroke="#fff3c4" stroke-width="0.8" stroke-linejoin="round"/><path d="M2706.0,252.60 C2706.2,252.57 2706.9,252.57 2707.3,252.45 C2707.8,252.32 2708.2,252.03 2708.6,251.83 C2709.0,251.62 2709.4,251.34 2709.7,251.21 C2710.0,251.08 2710.2,251.06 2710.5,251.06 C2710.8,251.06 2711.0,251.08 2711.3,251.21 C2711.6,251.34 2712.0,251.62 2712.4,251.83 C2712.8,252.03 2713.2,252.32 2713.7,252.45 C2714.1,252.57 2714.8,252.57 2715.0,252.60Z" fill="#fbc914" stroke="#fff3c4" stroke-width="0.8" stroke-linejoin="round"/><path d="M2760.5,252.60 C2761.3,249.70 2763.7,241.66 2765.6,235.23 C2767.5,228.80 2765.6,217.54 2772.0,214.00 C2779.1,214.30 2801.6,214.30 2808.0,214.00 C2810.5,217.73 2809.5,231.11 2810.5,236.39 C2811.5,241.66 2812.5,242.95 2814.0,245.65 C2815.5,248.35 2818.5,251.44 2819.4,252.60Z" fill="#fbc914" stroke="#fff3c4" stroke-width="0.8" stroke-linejoin="round"/><path d="M225.0,252.60 C225.6,250.54 227.3,242.95 228.8,240.25 C230.2,237.55 232.2,238.00 233.8,236.39 C235.3,234.78 236.8,229.95 238.0,230.60 C239.2,231.24 240.3,236.58 241.2,240.25 C242.2,243.91 243.3,250.54 243.8,252.60Z" fill="#d291f6" /><path d="M225.0,252.60 C226.0,252.09 228.9,250.54 231.0,249.51 C233.1,248.48 235.9,246.62 237.5,246.42 C239.1,246.23 239.7,247.32 240.6,248.35 C241.5,249.38 242.6,251.89 243.0,252.60Z" fill="#2fa852" /><path d="M48.8,252.60 C49.0,252.52 49.9,252.52 50.4,252.10 C51.0,251.68 51.5,250.76 52.0,250.09 C52.5,249.42 53.0,248.50 53.4,248.08 C53.8,247.67 54.1,247.58 54.4,247.58 C54.7,247.58 54.9,247.67 55.2,248.08 C55.5,248.50 55.8,249.42 56.2,250.09 C56.6,250.76 57.0,251.68 57.4,252.10 C57.9,252.52 58.5,252.52 58.8,252.60Z" fill="#d291f6" /><path d="M73.8,252.60 C73.9,252.55 74.5,252.55 74.9,252.29 C75.2,252.03 75.6,251.47 75.9,251.06 C76.2,250.64 76.6,250.08 76.8,249.82 C77.1,249.56 77.2,249.51 77.5,249.51 C77.8,249.51 78.1,249.56 78.4,249.82 C78.8,250.08 79.2,250.64 79.6,251.06 C80.0,251.47 80.5,252.03 81.0,252.29 C81.5,252.55 82.2,252.55 82.5,252.60Z" fill="#d291f6" /><path d="M137.5,252.60 C137.7,252.54 138.4,252.54 138.8,252.21 C139.3,251.89 139.7,251.18 140.1,250.67 C140.5,250.16 140.9,249.45 141.2,249.13 C141.5,248.80 141.7,248.74 142.0,248.74 C142.3,248.74 142.4,248.80 142.7,249.13 C143.0,249.45 143.3,250.16 143.7,250.67 C144.0,251.18 144.4,251.89 144.8,252.21 C145.2,252.54 145.8,252.54 146.0,252.60Z" fill="#d291f6" /><path d="M123.0,252.60 C123.2,252.57 123.6,252.57 123.9,252.45 C124.2,252.32 124.5,252.03 124.7,251.83 C125.0,251.62 125.2,251.34 125.5,251.21 C125.7,251.08 125.8,251.06 126.0,251.06 C126.2,251.06 126.3,251.08 126.5,251.21 C126.8,251.34 127.0,251.62 127.3,251.83 C127.5,252.03 127.8,252.32 128.1,252.45 C128.4,252.57 128.8,252.57 129.0,252.60Z" fill="#7aa7f5" /><path d="M59.0,252.60 C59.1,252.57 59.6,252.57 59.9,252.45 C60.2,252.32 60.5,252.03 60.7,251.83 C61.0,251.62 61.2,251.34 61.5,251.21 C61.7,251.08 61.8,251.06 62.0,251.06 C62.2,251.06 62.3,251.08 62.5,251.21 C62.8,251.34 63.0,251.62 63.3,251.83 C63.5,252.03 63.8,252.32 64.1,252.45 C64.4,252.57 64.8,252.57 65.0,252.60Z" fill="#7aa7f5" /><rect x="2814" y="213.5" width="52" height="19" fill="#fff" opacity=".92"/></svg>
<div style="position:absolute;left:0px;top:252.2px;width:34px;height:1px;background:#dcdcdc;"></div>
<span class="t" style="left:2821.78px;top:209.13px;font-size:20.4px;line-height:27px;color:#8a8a8a;font-weight:700;letter-spacing:0.6px;">CPU</span>
<span class="t" style="left:2824.17px;top:252.73px;font-size:20.4px;line-height:27px;color:#8a8a8a;font-weight:700;letter-spacing:0.6px;">NET</span>
<div style="position:absolute;left:0px;top:272.2px;width:2816px;height:1.6px;background:#e3e3e3;"></div>
<div style="position:absolute;left:0px;top:337.6px;width:2866px;height:2px;background:#c9dbf7;"></div>
</section>
<div id="filmstrip" aria-label="Screenshots filmstrip">
<svg style="position:absolute;left:0px;top:279px;" width="2866" height="57" viewBox="0 279 2866 57"><defs><symbol id="shot" viewBox="0 0 350 56.5" width="350" height="56.5"><rect x="0" y="0" width="350" height="56.5" fill="#fff"/><rect x="0" y="0" width="350" height="12" fill="#1b1d27"/><rect x="0" y="5.6" width="15" height="13.8" fill="#1c64ea"/><path d="M5.2,10.2 a2.3,2.3 0 0 1 4.6,0" stroke="#fff" stroke-width="1" fill="none"/><text x="1.6" y="16.6" font-size="3.6" fill="#cfe0ff" font-family="Liberation Sans, Noto Sans CJK SC, sans-serif">在线客服</text><text x="22" y="8" font-size="4.4" fill="#8e9099" textLength="14" lengthAdjust="spacingAndGlyphs" font-family="Liberation Sans, Noto Sans CJK SC, sans-serif">流程详情</text><circle cx="38.6" cy="6.4" r="1.3" fill="none" stroke="#8e9099" stroke-width=".5"/><rect x="44.6" y="3.6" width=".5" height="5.6" fill="#555863"/><text x="49" y="8.2" font-size="4.6" fill="#ffffff" textLength="15.5" lengthAdjust="spacingAndGlyphs" font-weight="700" font-family="Liberation Sans, Noto Sans CJK SC, sans-serif">模板配置</text><text x="67" y="8" font-size="3.6" fill="#6f717b" textLength="30" lengthAdjust="spacingAndGlyphs" font-family="Liberation Sans, Noto Sans CJK SC, sans-serif">2024-02-19 15:20:33</text><circle cx="101.4" cy="6.5" r="1.5" fill="none" stroke="#7d7f88" stroke-width=".5"/><circle cx="112.6" cy="6.4" r="2.4" fill="#23263a"/><text x="119" y="8.1" font-size="4.4" fill="#c9cad0" textLength="31" lengthAdjust="spacingAndGlyphs" font-family="Liberation Sans, Noto Sans CJK SC, sans-serif">设置文件与参与人</text><rect x="152.6" y="6" width="5.6" height=".7" fill="#9b9da6"/><circle cx="164.6" cy="6.4" r="2.1" fill="#2163e0"/><text x="169" y="8.2" font-size="4.6" fill="#ffffff" textLength="35" lengthAdjust="spacingAndGlyphs" font-weight="700" font-family="Liberation Sans, Noto Sans CJK SC, sans-serif">设置签署与填写位置</text><rect x="207" y="6" width="5.8" height=".7" fill="#9b9da6"/><circle cx="219" cy="6.4" r="2.6" fill="#a6a8b0"/><text x="224" y="8" font-size="4.4" fill="#9c9ea6" textLength="15" lengthAdjust="spacingAndGlyphs" font-family="Liberation Sans, Noto Sans CJK SC, sans-serif">应用授权</text><text x="290" y="8.2" font-size="4.2" fill="#9c9ea6" textLength="12" lengthAdjust="spacingAndGlyphs" font-family="Liberation Sans, Noto Sans CJK SC, sans-serif">预览</text><rect x="306.4" y="4" width=".5" height="5.4" fill="#555863"/><text x="310" y="9" font-size="4.4" fill="#e8e8ea" textLength="8" lengthAdjust="spacingAndGlyphs" font-family="Liberation Sans, Noto Sans CJK SC, sans-serif">更多</text><rect x="322.4" y="4" width=".5" height="5.4" fill="#444752"/><rect x="329.4" y="2.8" width="14.6" height="6.4" rx=".8" fill="#1c64ea"/><text x="333.4" y="7.6" font-size="4" fill="#fff" textLength="7" lengthAdjust="spacingAndGlyphs" font-family="Liberation Sans, Noto Sans CJK SC, sans-serif">保存</text><path d="M19.4,16 h3.2 a1.5,1.5 0 0 1 0,3 h-2.6 M20.4,14.8 l-1.2,1.2 l1.2,1.2" fill="none" stroke="#777" stroke-width=".6"/><circle cx="194" cy="17" r="2" fill="none" stroke="#5a55d6" stroke-width=".8"/><path d="M193,17 l.8,.8 l1.3,-1.5" stroke="#5a55d6" stroke-width=".5" fill="none"/><text x="198.6" y="18.6" font-size="4" fill="#b4b6bc" textLength="16.4" lengthAdjust="spacingAndGlyphs" font-family="Liberation Sans, Noto Sans CJK SC, sans-serif">校验无异常</text><rect x="111" y="18.8" width="2.6" height=".8" fill="#b0b0b0"/><rect x="267.6" y="15.4" width="4" height="3.2" fill="none" stroke="#b9b9b9" stroke-width=".6"/><rect x="275.2" y="12" width=".5" height="44.5" fill="#ececf0"/><rect x="282.6" y="14.8" width="2.4" height=".6" fill="#999"/><rect x="283.5" y="14.8" width=".6" height="3.6" fill="#999"/><text x="287.5" y="18.6" font-size="4.3" fill="#4a4a4a" textLength="32.6" lengthAdjust="spacingAndGlyphs" font-family="Liberation Sans, Noto Sans CJK SC, sans-serif">拆行文本4精选面板</text><rect x="337.4" y="15.6" width="2.4" height="2.4" fill="none" stroke="#666" stroke-width=".6"/><path d="M343.4,16 l1.8,1.8 M345.2,16 l-1.8,1.8" stroke="#888" stroke-width=".5"/><rect x="281" y="25" width="61" height="7.8" fill="#fff" stroke="#dcdde2" stroke-width=".6"/><rect x="281" y="24.7" width="61" height=".6" fill="#245089"/><text x="284.6" y="31.2" font-size="4.4" fill="#666" font-family="Liberation Sans, Noto Sans CJK SC, sans-serif">1</text><path d="M343.4,26 l2,2.6 M345.4,26 l-2,2.6 M343.4,29.6 h2" stroke="#999" stroke-width=".5"/><text x="281" y="41" font-size="3.8" fill="#777" textLength="13.4" lengthAdjust="spacingAndGlyphs" font-family="Liberation Sans, Noto Sans CJK SC, sans-serif">填写须知</text><path d="M343.4,38.4 l2.4,2.2 M345.8,38.4 l-2.4,2.2 M343,39.4 h3.2" stroke="#666" stroke-width=".6"/><text x="302" y="50.6" font-size="3.8" fill="#999" textLength="23" lengthAdjust="spacingAndGlyphs" font-family="Liberation Sans, Noto Sans CJK SC, sans-serif">恢复为默认组件</text><circle cx="344.8" cy="50" r="2.7" fill="#fff" stroke="#4c5be0" stroke-width=".8"/><path d="M343.6,50.6 a1.3,1.3 0 0 0 2.4,0" stroke="#4c5be0" stroke-width=".5" fill="none"/><rect x="262.6" y="29" width="9.6" height="27.5" fill="#fff"/><rect x="262.2" y="29" width=".4" height="27.5" fill="#f0f0f3"/><path d="M267.6,33.6 v3.4 M266.4,34.8 l1.2,-1.2 l1.2,1.2" stroke="#d5d5d8" stroke-width=".5" fill="none"/><path d="M266,42.4 l1.7,1.4 l1.7,-1.4 M266,45 h3.4" stroke="#777" stroke-width=".6" fill="none"/><rect x="274.4" y="21" width=".8" height="3.4" fill="#d8d8dc"/><text x="3.8" y="28" font-size="4" fill="#333" textLength="30" lengthAdjust="spacingAndGlyphs" font-family="Liberation Sans, Noto Sans CJK SC, sans-serif">请在中间区域拖入组件</text><rect x="37.6" y="25.6" width="2" height="2" fill="#ddd"/><rect x="43.6" y="25" width=".5" height="3" fill="#bbb"/><rect x="48" y="26.6" width="2.2" height=".5" fill="#bbb"/><rect x="4.5" y="33.5" width="42" height="23" rx="1.2" fill="#ecf2fd"/><rect x="12" y="36" width="27" height="20.5" fill="#f5f8fe"/><rect x="21" y="42.4" width="10" height=".7" fill="#dde6f7"/><rect x="15" y="47.4" width="21" height=".7" fill="#dde6f7"/><rect x="18" y="52.4" width="14" height=".7" fill="#dde6f7"/><rect x="51" y="21" width="17" height="35.5" fill="#fbfcfe"/><rect x="109.3" y="52" width="113" height="4.5" fill="#2a2a32"/><rect x="150.6" y="54.8" width="4.2" height="1.7" fill="#8d7cf0"/><text x="102" y="55.6" font-size="3.6" fill="#111" textLength="6" lengthAdjust="spacingAndGlyphs" font-weight="700" font-family="Liberation Sans, Noto Sans CJK SC, sans-serif">25</text><rect x=".25" y=".25" width="349.5" height="56" fill="none" stroke="#cfcfd4" stroke-width=".5"/></symbol></defs><use href="#shot" x="-4" y="279"/><use href="#shot" x="350" y="279"/><use href="#shot" x="704" y="279"/><use href="#shot" x="1058" y="279"/><use href="#shot" x="1412" y="279"/><use href="#shot" x="1766" y="279"/><use href="#shot" x="2120" y="279"/><use href="#shot" x="2474" y="279"/><use href="#shot" x="2828" y="279"/><rect x="279" y="305.2" width="40" height="6" fill="#fff"/><text x="279.6" y="310.4" font-size="3.8" fill="#c9cbd1" textLength="20" lengthAdjust="spacingAndGlyphs" font-family="Liberation Sans, Noto Sans CJK SC, sans-serif">请输入内容</text></svg>
</div>
<section id="flamechart" aria-label="Main timeline">
<div style="position:absolute;left:0px;top:339.6px;width:2866px;height:160px;background:#fff;"></div>
<div style="position:absolute;left:10.1px;top:340px;width:1.8px;height:158px;background:#e4e8f7;"></div>
<div style="position:absolute;left:10.1px;top:514px;width:1.8px;height:40px;background:#e4e8f7;"></div>
<div style="position:absolute;left:243.2px;top:340px;width:1.8px;height:158px;background:#e4e8f7;"></div>
<div style="position:absolute;left:243.2px;top:514px;width:1.8px;height:40px;background:#e4e8f7;"></div>
<span class="t" style="left:146.62px;top:342.10px;font-size:22.5px;line-height:29px;color:#1f1f1f;letter-spacing:0.500px;">1700 ms</span>
<div style="position:absolute;left:476.3px;top:340px;width:1.8px;height:158px;background:#e4e8f7;"></div>
<div style="position:absolute;left:476.3px;top:514px;width:1.8px;height:40px;background:#e4e8f7;"></div>
<span class="t" style="left:379.74px;top:342.10px;font-size:22.5px;line-height:29px;color:#1f1f1f;letter-spacing:0.500px;">1800 ms</span>
<div style="position:absolute;left:709.5px;top:340px;width:1.8px;height:158px;background:#e4e8f7;"></div>
<div style="position:absolute;left:709.5px;top:514px;width:1.8px;height:40px;background:#e4e8f7;"></div>
<span class="t" style="left:612.86px;top:342.10px;font-size:22.5px;line-height:29px;color:#1f1f1f;letter-spacing:0.500px;">1900 ms</span>
<div style="position:absolute;left:942.6px;top:340px;width:1.8px;height:158px;background:#e4e8f7;"></div>
<div style="position:absolute;left:942.6px;top:514px;width:1.8px;height:40px;background:#e4e8f7;"></div>
<span class="t" style="left:845.98px;top:342.10px;font-size:22.5px;line-height:29px;color:#1f1f1f;letter-spacing:0.500px;">2000 ms</span>
<div style="position:absolute;left:1175.7px;top:340px;width:1.8px;height:158px;background:#e4e8f7;"></div>
<div style="position:absolute;left:1175.7px;top:514px;width:1.8px;height:40px;background:#e4e8f7;"></div>
<span class="t" style="left:1079.10px;top:342.10px;font-size:22.5px;line-height:29px;color:#1f1f1f;letter-spacing:0.500px;">2100 ms</span>
<div style="position:absolute;left:1408.8px;top:340px;width:1.8px;height:158px;background:#e4e8f7;"></div>
<div style="position:absolute;left:1408.8px;top:514px;width:1.8px;height:40px;background:#e4e8f7;"></div>
<span class="t" style="left:1312.22px;top:342.10px;font-size:22.5px;line-height:29px;color:#1f1f1f;letter-spacing:0.500px;">2200 ms</span>
<div style="position:absolute;left:1641.9px;top:340px;width:1.8px;height:158px;background:#e4e8f7;"></div>
<div style="position:absolute;left:1641.9px;top:514px;width:1.8px;height:40px;background:#e4e8f7;"></div>
<span class="t" style="left:1545.34px;top:342.10px;font-size:22.5px;line-height:29px;color:#1f1f1f;letter-spacing:0.500px;">2300 ms</span>
<div style="position:absolute;left:1875.1px;top:340px;width:1.8px;height:158px;background:#e4e8f7;"></div>
<div style="position:absolute;left:1875.1px;top:514px;width:1.8px;height:40px;background:#e4e8f7;"></div>
<span class="t" style="left:1778.46px;top:342.10px;font-size:22.5px;line-height:29px;color:#1f1f1f;letter-spacing:0.500px;">2400 ms</span>
<div style="position:absolute;left:2108.2px;top:340px;width:1.8px;height:158px;background:#e4e8f7;"></div>
<div style="position:absolute;left:2108.2px;top:514px;width:1.8px;height:40px;background:#e4e8f7;"></div>
<span class="t" style="left:2011.58px;top:342.10px;font-size:22.5px;line-height:29px;color:#1f1f1f;letter-spacing:0.500px;">2500 ms</span>
<div style="position:absolute;left:2341.3px;top:340px;width:1.8px;height:158px;background:#e4e8f7;"></div>
<div style="position:absolute;left:2341.3px;top:514px;width:1.8px;height:40px;background:#e4e8f7;"></div>
<span class="t" style="left:2244.70px;top:342.10px;font-size:22.5px;line-height:29px;color:#1f1f1f;letter-spacing:0.500px;">2600 ms</span>
<div style="position:absolute;left:2574.4px;top:340px;width:1.8px;height:158px;background:#e4e8f7;"></div>
<div style="position:absolute;left:2574.4px;top:514px;width:1.8px;height:40px;background:#e4e8f7;"></div>
<span class="t" style="left:2477.82px;top:342.10px;font-size:22.5px;line-height:29px;color:#1f1f1f;letter-spacing:0.500px;">2700 ms</span>
<div style="position:absolute;left:2807.5px;top:340px;width:1.8px;height:158px;background:#e4e8f7;"></div>
<div style="position:absolute;left:2807.5px;top:514px;width:1.8px;height:40px;background:#e4e8f7;"></div>
<span class="t" style="left:2710.94px;top:342.10px;font-size:22.5px;line-height:29px;color:#1f1f1f;letter-spacing:0.500px;">2800 ms</span>
<span class="t" style="left:-9.68px;top:342.10px;font-size:22.5px;line-height:29px;color:#1f1f1f;">s</span>
<svg style="position:absolute;left:0px;top:380px;" width="30" height="22" viewBox="0 380 30 22"><path d="M7,384.4 H22 L14.5,397.2 Z" fill="#878787"/></svg>
<span class="t" style="left:27.69px;top:376.07px;font-size:22.6px;line-height:29px;color:#1f1f1f;letter-spacing:0.728px;">Network</span>
<div style="position:absolute;left:154px;top:382px;width:15.6px;height:15.6px;background:#4c8bf5;border-radius:3.4px"></div>
<span class="t" style="left:177.19px;top:379.72px;font-size:16.4px;line-height:21px;color:#2a2a2a;letter-spacing:1.015px;">Doc</span>
<div style="position:absolute;left:233px;top:382px;width:15.6px;height:15.6px;background:#c163f7;border-radius:3.4px"></div>
<span class="t" style="left:257.18px;top:379.72px;font-size:16.4px;line-height:21px;color:#2a2a2a;letter-spacing:-0.322px;">CSS</span>
<div style="position:absolute;left:314px;top:382px;width:15.6px;height:15.6px;background:#fbcb14;border-radius:3.4px"></div>
<span class="t" style="left:338.75px;top:379.72px;font-size:16.4px;line-height:21px;color:#2a2a2a;letter-spacing:-0.622px;">JS</span>
<div style="position:absolute;left:382px;top:382px;width:15.6px;height:15.6px;background:#0a9dc0;border-radius:3.4px"></div>
<span class="t" style="left:405.19px;top:379.72px;font-size:16.4px;line-height:21px;color:#2a2a2a;letter-spacing:0.698px;">Font</span>
<div style="position:absolute;left:465px;top:382px;width:15.6px;height:15.6px;background:#6fd58c;border-radius:3.4px"></div>
<span class="t" style="left:488.02px;top:379.72px;font-size:16.4px;line-height:21px;color:#2a2a2a;letter-spacing:1.618px;">Img</span>
<div style="position:absolute;left:542.5px;top:382px;width:15.6px;height:15.6px;background:#22a447;border-radius:3.4px"></div>
<span class="t" style="left:565.69px;top:379.72px;font-size:16.4px;line-height:21px;color:#2a2a2a;letter-spacing:0.655px;">Media</span>
<div style="position:absolute;left:638.6px;top:382px;width:15.6px;height:15.6px;background:#8f7ff9;border-radius:3.4px"></div>
<span class="t" style="left:662.92px;top:379.72px;font-size:16.4px;line-height:21px;color:#2a2a2a;letter-spacing:0.409px;">Wasm</span>
<div style="position:absolute;left:733.7px;top:382px;width:15.6px;height:15.6px;background:#cacaca;border-radius:3.4px"></div>
<span class="t" style="left:757.26px;top:379.72px;font-size:16.4px;line-height:21px;color:#2a2a2a;letter-spacing:0.996px;">Other</span>
<div style="position:absolute;left:0px;top:409.8px;width:2850px;height:1.4px;background:#ededed;"></div>
<div style="position:absolute;left:10.0px;top:409.8px;width:2px;height:1.4px;background:#e4e8f7;"></div>
<div style="position:absolute;left:243.1px;top:409.8px;width:2px;height:1.4px;background:#e4e8f7;"></div>
<div style="position:absolute;left:476.2px;top:409.8px;width:2px;height:1.4px;background:#e4e8f7;"></div>
<div style="position:absolute;left:709.4px;top:409.8px;width:2px;height:1.4px;background:#e4e8f7;"></div>
<div style="position:absolute;left:942.5px;top:409.8px;width:2px;height:1.4px;background:#e4e8f7;"></div>
<div style="position:absolute;left:1175.6px;top:409.8px;width:2px;height:1.4px;background:#e4e8f7;"></div>
<div style="position:absolute;left:1408.7px;top:409.8px;width:2px;height:1.4px;background:#e4e8f7;"></div>
<div style="position:absolute;left:1641.8px;top:409.8px;width:2px;height:1.4px;background:#e4e8f7;"></div>
<div style="position:absolute;left:1875.0px;top:409.8px;width:2px;height:1.4px;background:#e4e8f7;"></div>
<div style="position:absolute;left:2108.1px;top:409.8px;width:2px;height:1.4px;background:#e4e8f7;"></div>
<div style="position:absolute;left:2341.2px;top:409.8px;width:2px;height:1.4px;background:#e4e8f7;"></div>
<div style="position:absolute;left:2574.3px;top:409.8px;width:2px;height:1.4px;background:#e4e8f7;"></div>
<div style="position:absolute;left:2807.4px;top:409.8px;width:2px;height:1.4px;background:#e4e8f7;"></div>
<div style="position:absolute;left:0px;top:498px;width:2866px;height:2px;background:#cfe0f9;"></div>
<div style="position:absolute;left:0px;top:500px;width:2866px;height:12px;background:#f3f5fc;"></div>
<div style="position:absolute;left:0px;top:512px;width:2866px;height:2px;background:#cfe0f9;"></div>
<svg style="position:absolute;left:1420px;top:502px;" width="28" height="8" viewBox="1420 502 28 8"><circle cx="1425.2" cy="506" r="1.5" fill="#222"/><circle cx="1433.8" cy="506" r="1.5" fill="#222"/><circle cx="1442.4" cy="506" r="1.5" fill="#222"/></svg>
<svg style="position:absolute;left:0px;top:520px;" width="30" height="28" viewBox="0 520 30 28"><path d="M8.2,526.4 V542 L21.6,534.2 Z" fill="#878787"/></svg>
<span class="t" style="left:62.05px;top:524.82px;font-size:19px;line-height:25px;color:#e1e1e1;letter-spacing:2.902px;">233.</span>
<span class="t" style="left:27.72px;top:520.31px;font-size:22.2px;line-height:29px;color:#1f1f1f;letter-spacing:0.359px;">Frames</span>
<span class="t" style="left:109.10px;top:522.07px;font-size:22.6px;line-height:29px;color:#1f1f1f;letter-spacing:0.589px;">3 ms</span>
<div style="position:absolute;left:2854px;top:520.5px;width:14px;height:27.4px;background:#c1c1c1;border-radius:7px 0 0 7px"></div>
<div style="position:absolute;left:0px;top:554px;width:2866px;height:2px;background:#cfe0f9;"></div>
</section>
<nav id="detail-tabs" aria-label="Details tabs">
<div style="position:absolute;left:0px;top:556px;width:2866px;height:52px;background:#edf2fa;"></div>
<div style="position:absolute;left:0px;top:608px;width:2866px;height:2px;background:#d3e3fd;"></div>
<span class="t" style="left:12.89px;top:566.88px;font-size:24.6px;line-height:32px;color:#474747;letter-spacing:0.053px;">Summary</span>
<span class="t" style="left:158.03px;top:566.88px;font-size:24.6px;line-height:32px;color:#474747;letter-spacing:1.170px;">Bottom-Up</span>
<span class="t" style="left:324.77px;top:566.88px;font-size:24.6px;line-height:32px;color:#474747;letter-spacing:0.117px;">Call Tree</span>
<span class="t" style="left:462.03px;top:566.88px;font-size:24.6px;line-height:32px;color:#0b57d0;letter-spacing:0.358px;">Event Log</span>
<div style="position:absolute;left:444px;top:606.3px;width:152px;height:3.3px;background:#1a62d8;"></div>
</nav>
<div id="filter-bar" aria-label="Event log filters">
<div style="position:absolute;left:0px;top:610px;width:2476px;height:52px;background:#fff;"></div>
<span class="t" style="left:10.38px;top:620.88px;font-size:24.6px;line-height:32px;color:#3c3c3c;font-weight:700;letter-spacing:-1.996px;">Aa</span>
<span class="t" style="left:73.40px;top:620.88px;font-size:24.6px;line-height:32px;color:#3c3c3c;font-weight:700;letter-spacing:-0.760px;">.*</span>
<span class="t" style="left:125.14px;top:619.45px;font-size:21.5px;line-height:28px;color:#3c3c3c;letter-spacing:1.855px;">ab</span>
<svg style="position:absolute;left:118px;top:636px;" width="40" height="12" viewBox="118 636 40 12"><path d="M122.5,638.6 V644.4 H153.8 V638.6" fill="none" stroke="#3c3c3c" stroke-width="2.4"/></svg>
<div style="position:absolute;left:172px;top:615.6px;width:239px;height:40.2px;background:#edf2fa;border-radius:20.1px"></div>
<svg style="position:absolute;left:190px;top:622px;" width="28" height="28" viewBox="190 622 28 28"><path d="M196.4,628.4 H211.8 L205.6,636.4 V644.6 H202.6 V636.4 Z" fill="none" stroke="#474747" stroke-width="2.5" stroke-linejoin="round"/></svg>
<span class="t" style="left:227.03px;top:620.88px;font-size:24.6px;line-height:32px;color:#474747;letter-spacing:0.645px;">Filter</span>
<span class="t" style="left:431.00px;top:620.88px;font-size:24.6px;line-height:32px;color:#474747;letter-spacing:0.146px;">All</span>
<svg style="position:absolute;left:530px;top:628px;" width="22" height="18" viewBox="530 628 22 18"><path d="M533.6,631.6 H548.6 L541.1,642 Z" fill="#474747"/></svg>
<div class="cb on" style="left:579px;top:624.4px;width:24px;height:24px"><svg width="24" height="24" viewBox="0 0 24 24"><path d="M4.7 13 L9.5 17.7 L18.9 6.5" fill="none" stroke="#fff" stroke-width="3.3" stroke-linecap="butt" stroke-linejoin="miter"/></svg></div>
<span class="t" style="left:614.03px;top:620.88px;font-size:24.6px;line-height:32px;color:#474747;letter-spacing:0.665px;">Loading</span>
<div class="cb on" style="left:727px;top:624.4px;width:24px;height:24px"><svg width="24" height="24" viewBox="0 0 24 24"><path d="M4.7 13 L9.5 17.7 L18.9 6.5" fill="none" stroke="#fff" stroke-width="3.3" stroke-linecap="butt" stroke-linejoin="miter"/></svg></div>
<span class="t" style="left:761.73px;top:620.88px;font-size:24.6px;line-height:32px;color:#474747;letter-spacing:0.616px;">Messaging</span>
<div class="cb on" style="left:906.6px;top:624.4px;width:24px;height:24px"><svg width="24" height="24" viewBox="0 0 24 24"><path d="M4.7 13 L9.5 17.7 L18.9 6.5" fill="none" stroke="#fff" stroke-width="3.3" stroke-linecap="butt" stroke-linejoin="miter"/></svg></div>
<span class="t" style="left:942.89px;top:620.88px;font-size:24.6px;line-height:32px;color:#474747;letter-spacing:0.814px;">Scripting</span>
<div class="cb on" style="left:1065.8px;top:624.4px;width:24px;height:24px"><svg width="24" height="24" viewBox="0 0 24 24"><path d="M4.7 13 L9.5 17.7 L18.9 6.5" fill="none" stroke="#fff" stroke-width="3.3" stroke-linecap="butt" stroke-linejoin="miter"/></svg></div>
<span class="t" style="left:1101.63px;top:620.88px;font-size:24.6px;line-height:32px;color:#474747;letter-spacing:0.430px;">Rendering</span>
<div class="cb on" style="left:1240px;top:624.4px;width:24px;height:24px"><svg width="24" height="24" viewBox="0 0 24 24"><path d="M4.7 13 L9.5 17.7 L18.9 6.5" fill="none" stroke="#fff" stroke-width="3.3" stroke-linecap="butt" stroke-linejoin="miter"/></svg></div>
<span class="t" style="left:1274.03px;top:620.88px;font-size:24.6px;line-height:32px;color:#474747;letter-spacing:0.663px;">Painting</span>
<div style="position:absolute;left:0px;top:662px;width:2476px;height:4px;background:#d3e3fd;"></div>
</div>
<section id="event-log" aria-label="Event log">
<div style="position:absolute;left:0px;top:666px;width:2472px;height:376px;background:#fff;"></div>
<div style="position:absolute;left:0px;top:666px;width:2472px;height:40.8px;background:#f8fafd;"></div>
<span class="t" style="left:3.89px;top:670.88px;font-size:24.6px;line-height:32px;color:#1f1f1f;letter-spacing:0.740px;">Start Time</span>
<span class="t" style="left:165.89px;top:670.88px;font-size:24.6px;line-height:32px;color:#1f1f1f;letter-spacing:0.532px;">Self Time</span>
<span class="t" style="left:327.01px;top:670.88px;font-size:24.6px;line-height:32px;color:#1f1f1f;letter-spacing:0.505px;">Total Time</span>
<span class="t" style="left:487.50px;top:670.88px;font-size:24.6px;line-height:32px;color:#1f1f1f;letter-spacing:0.592px;">Activity</span>
<svg style="position:absolute;left:124px;top:678px;" width="20" height="18" viewBox="124 678 20 18"><path d="M126,692.6 H142 L134,681 Z" fill="#474747"/></svg>
<div class="row" style="position:absolute;left:0px;top:706.4px;width:2472px;height:41.3px;background:#d3e3fd;"></div>
<span class="t" style="left:35.30px;top:713.15px;font-size:24.1px;line-height:31px;color:#0a1f4a;">1613.0 ms</span>
<span class="t" style="left:235.54px;top:713.15px;font-size:24.1px;line-height:31px;color:#0a1f4a;">0.0 ms</span>
<span class="t" style="left:395.54px;top:713.15px;font-size:24.1px;line-height:31px;color:#0a1f4a;">0.0 ms</span>
<div style="position:absolute;left:528px;top:716.1px;width:22px;height:22px;background:#d18df8;border:1px solid #c27fe9"></div>
<span class="t" style="left:563.89px;top:712.48px;font-size:24.6px;line-height:32px;color:#0a1f4a;letter-spacing:0.338px;">Schedule Style Recalculation</span>
<div class="row" style="position:absolute;left:0px;top:747.5px;width:2472px;height:40.2px;background:#ffffff;"></div>
<div style="position:absolute;left:164px;top:750.8px;width:152px;height:32.4px;background:#fef4d1;border-bottom:2.2px solid #f3bd1a"></div>
<div style="position:absolute;left:466px;top:750.8px;width:10px;height:32.4px;background:#fef4d1;border-bottom:2.2px solid #f3bd1a"></div>
<span class="t" style="left:35.30px;top:753.15px;font-size:24.1px;line-height:31px;color:#1f1f1f;">1613.1 ms</span>
<span class="t" style="left:235.54px;top:753.15px;font-size:24.1px;line-height:31px;color:#1f1f1f;">0.1 ms</span>
<span class="t" style="left:395.54px;top:753.15px;font-size:24.1px;line-height:31px;color:#1f1f1f;">5.1 ms</span>
<div style="position:absolute;left:528px;top:756.1px;width:22px;height:22px;background:#fac915;border:1px solid #e9b90e"></div>
<span class="t" style="left:563.03px;top:752.48px;font-size:24.6px;line-height:32px;color:#1f1f1f;letter-spacing:0.376px;">Event: keydown</span>
<svg style="position:absolute;left:494px;top:759.5px;" width="16" height="22" viewBox="494 759.5 16 22"><path d="M496,762.3 V777.1 L507.4,769.7 Z" fill="#474747"/></svg>
<div class="row" style="position:absolute;left:0px;top:787.5px;width:2472px;height:40.2px;background:#f8fafd;"></div>
<div style="position:absolute;left:201px;top:790.8px;width:115px;height:32.4px;background:#fef4d1;border-bottom:2.2px solid #f3bd1a"></div>
<div style="position:absolute;left:324px;top:790.8px;width:152px;height:32.4px;background:#fef4d1;border-bottom:2.2px solid #f3bd1a"></div>
<span class="t" style="left:35.30px;top:793.15px;font-size:24.1px;line-height:31px;color:#1f1f1f;">1618.2 ms</span>
<span class="t" style="left:235.54px;top:793.15px;font-size:24.1px;line-height:31px;color:#1f1f1f;">0.1 ms</span>
<span class="t" style="left:382.17px;top:793.15px;font-size:24.1px;line-height:31px;color:#1f1f1f;">75.2 ms</span>
<div style="position:absolute;left:528px;top:796.1px;width:22px;height:22px;background:#fac915;border:1px solid #e9b90e"></div>
<span class="t" style="left:563.03px;top:792.48px;font-size:24.6px;line-height:32px;color:#1f1f1f;letter-spacing:0.271px;">Event: keypress</span>
<svg style="position:absolute;left:492px;top:801.5px;" width="18" height="18" viewBox="492 801.5 18 18"><path d="M494,805.9 H508.4 L501.2,816.1 Z" fill="#474747"/></svg>
<div class="row" style="position:absolute;left:0px;top:827.5px;width:2472px;height:40.2px;background:#e7e7e7;"></div>
<div style="position:absolute;left:164px;top:830.8px;width:152px;height:32.4px;background:#fef4d1;border-bottom:2.2px solid #f3bd1a"></div>
<span class="t" style="left:35.30px;top:833.15px;font-size:24.1px;line-height:31px;color:#1f1f1f;">1618.2 ms</span>
<span class="t" style="left:235.54px;top:833.15px;font-size:24.1px;line-height:31px;color:#1f1f1f;">0.1 ms</span>
<span class="t" style="left:395.54px;top:833.15px;font-size:24.1px;line-height:31px;color:#1f1f1f;">0.1 ms</span>
<div style="position:absolute;left:550px;top:836.1px;width:22px;height:22px;background:#fac915;border:1px solid #e9b90e"></div>
<span class="t" style="left:585.03px;top:832.48px;font-size:24.6px;line-height:32px;color:#1f1f1f;letter-spacing:0.460px;">Function Call</span>
<svg style="position:absolute;left:516px;top:839.5px;" width="16" height="22" viewBox="516 839.5 16 22"><path d="M518,842.3 V857.1 L529.4,849.7 Z" fill="#474747"/></svg>
<div class="row" style="position:absolute;left:0px;top:867.5px;width:2472px;height:40.2px;background:#f8fafd;"></div>
<span class="t" style="left:35.30px;top:873.15px;font-size:24.1px;line-height:31px;color:#1f1f1f;">1618.3 ms</span>
<span class="t" style="left:235.54px;top:873.15px;font-size:24.1px;line-height:31px;color:#1f1f1f;">0.0 ms</span>
<span class="t" style="left:395.54px;top:873.15px;font-size:24.1px;line-height:31px;color:#1f1f1f;">0.0 ms</span>
<div style="position:absolute;left:550px;top:876.1px;width:22px;height:22px;background:#cbcbcb;border:1px solid #b9b9b9"></div>
<span class="t" style="left:585.15px;top:872.48px;font-size:24.6px;line-height:32px;color:#1f1f1f;letter-spacing:0.601px;">UpdateCounters</span>
<div class="row" style="position:absolute;left:0px;top:907.5px;width:2472px;height:40.2px;background:#ffffff;"></div>
<div style="position:absolute;left:164px;top:910.8px;width:152px;height:32.4px;background:#fef4d1;border-bottom:2.2px solid #f3bd1a"></div>
<span class="t" style="left:35.30px;top:913.15px;font-size:24.1px;line-height:31px;color:#1f1f1f;">1618.3 ms</span>
<span class="t" style="left:235.54px;top:913.15px;font-size:24.1px;line-height:31px;color:#1f1f1f;">0.2 ms</span>
<span class="t" style="left:395.54px;top:913.15px;font-size:24.1px;line-height:31px;color:#1f1f1f;">0.2 ms</span>
<div style="position:absolute;left:550px;top:916.1px;width:22px;height:22px;background:#d18df8;border:1px solid #c27fe9"></div>
<span class="t" style="left:585.03px;top:912.48px;font-size:24.6px;line-height:32px;color:#1f1f1f;letter-spacing:0.346px;">Recalculate Style</span>
<svg style="position:absolute;left:516px;top:919.5px;" width="16" height="22" viewBox="516 919.5 16 22"><path d="M518,922.3 V937.1 L529.4,929.7 Z" fill="#474747"/></svg>
<div class="row" style="position:absolute;left:0px;top:947.5px;width:2472px;height:40.2px;background:#f8fafd;"></div>
<div style="position:absolute;left:234px;top:950.8px;width:82px;height:32.4px;background:#fef4d1;border-bottom:2.2px solid #f3bd1a"></div>
<span class="t" style="left:35.30px;top:953.15px;font-size:24.1px;line-height:31px;color:#1f1f1f;">1618.6 ms</span>
<span class="t" style="left:235.54px;top:953.15px;font-size:24.1px;line-height:31px;color:#1f1f1f;">0.1 ms</span>
<span class="t" style="left:395.54px;top:953.15px;font-size:24.1px;line-height:31px;color:#1f1f1f;">0.2 ms</span>
<div style="position:absolute;left:550px;top:956.1px;width:22px;height:22px;background:#fac915;border:1px solid #e9b90e"></div>
<span class="t" style="left:585.03px;top:952.48px;font-size:24.6px;line-height:32px;color:#1f1f1f;letter-spacing:0.498px;">Event: beforeinput</span>
<svg style="position:absolute;left:516px;top:959.5px;" width="16" height="22" viewBox="516 959.5 16 22"><path d="M518,962.3 V977.1 L529.4,969.7 Z" fill="#474747"/></svg>
<div class="row" style="position:absolute;left:0px;top:987.5px;width:2472px;height:40.2px;background:#ffffff;"></div>
<div style="position:absolute;left:164px;top:990.8px;width:152px;height:32.4px;background:#fef4d1;border-bottom:2.2px solid #f3bd1a"></div>
<div style="position:absolute;left:325px;top:990.8px;width:151px;height:32.4px;background:#fef4d1;border-bottom:2.2px solid #f3bd1a"></div>
<span class="t" style="left:35.30px;top:993.15px;font-size:24.1px;line-height:31px;color:#1f1f1f;">1618.8 ms</span>
<span class="t" style="left:235.54px;top:993.15px;font-size:24.1px;line-height:31px;color:#1f1f1f;">0.4 ms</span>
<span class="t" style="left:382.17px;top:993.15px;font-size:24.1px;line-height:31px;color:#1f1f1f;">74.6 ms</span>
<div style="position:absolute;left:550px;top:996.1px;width:22px;height:22px;background:#fac915;border:1px solid #e9b90e"></div>
<span class="t" style="left:585.03px;top:992.48px;font-size:24.6px;line-height:32px;color:#1f1f1f;letter-spacing:0.496px;">Event: textInput</span>
<svg style="position:absolute;left:514px;top:1001.5px;" width="18" height="18" viewBox="514 1001.5 18 18"><path d="M516,1005.9 H530.4 L523.2,1016.1 Z" fill="#474747"/></svg>
<div class="row" style="position:absolute;left:0px;top:1027.5px;width:2472px;height:40.2px;background:#f8fafd;"></div>
<span class="t" style="left:35.30px;top:1033.15px;font-size:24.1px;line-height:31px;color:#1f1f1f;">1618.8 ms</span>
<span class="t" style="left:235.54px;top:1033.15px;font-size:24.1px;line-height:31px;color:#1f1f1f;">0.0 ms</span>
<span class="t" style="left:395.54px;top:1033.15px;font-size:24.1px;line-height:31px;color:#1f1f1f;">0.0 ms</span>
<div style="position:absolute;left:580px;top:1036.1px;width:22px;height:22px;background:#d18df8;border:1px solid #c27fe9"></div>
<span class="t" style="left:616.38px;top:1032.35px;font-size:24.950000000000003px;line-height:32px;color:#1f1f1f;">Schedule Style Recalculation</span>
<div style="position:absolute;left:156.1px;top:666px;width:1.8px;height:376px;background:#c9dbf8;"></div>
<div style="position:absolute;left:156px;top:706.4px;width:2px;height:41.1px;background:#a9c6f6;"></div>
<div style="position:absolute;left:316.1px;top:666px;width:1.8px;height:376px;background:#c9dbf8;"></div>
<div style="position:absolute;left:316px;top:706.4px;width:2px;height:41.1px;background:#a9c6f6;"></div>
<div style="position:absolute;left:476.1px;top:666px;width:1.8px;height:376px;background:#c9dbf8;"></div>
<div style="position:absolute;left:476px;top:706.4px;width:2px;height:41.1px;background:#a9c6f6;"></div>
</section>
<aside id="details-pane" aria-label="Details">
<div style="position:absolute;left:2476px;top:610px;width:390px;height:432px;background:#fff;"></div>
<div style="position:absolute;left:2473.6px;top:610px;width:1.8px;height:52px;background:#d3e3fd;"></div>
<div style="position:absolute;left:2472px;top:662px;width:4px;height:380px;background:#d3e3fd;"></div>
<span class="t" style="left:2538.60px;top:812.78px;font-size:26.6px;line-height:35px;color:#8c8c8c;letter-spacing:0.521px;">Select item for details.</span>
<div style="position:absolute;left:0;top:956px;width:2866px;height:86px;background:linear-gradient(to right,rgba(255,255,255,0) 0,rgba(255,255,255,0) 2560px,rgba(255,255,255,.85) 2760px,rgba(255,255,255,.9) 2866px),linear-gradient(to bottom,rgba(0,0,0,0) 0%,rgba(0,0,0,.012) 40%,rgba(0,0,0,.035) 70%,rgba(0,0,0,.06) 88%,rgba(0,0,0,.09) 100%)"></div>
<span class="t wm" style="left:2512.5px;top:984.6px;font-size:24.5px;line-height:34px;letter-spacing:0.1px">掘金技术社区<span style="letter-spacing:0;margin-left:9px">@</span><span style="letter-spacing:1.05px;margin-left:5.5px">JerisonPaul</span></span>
</aside>
</body></html>
